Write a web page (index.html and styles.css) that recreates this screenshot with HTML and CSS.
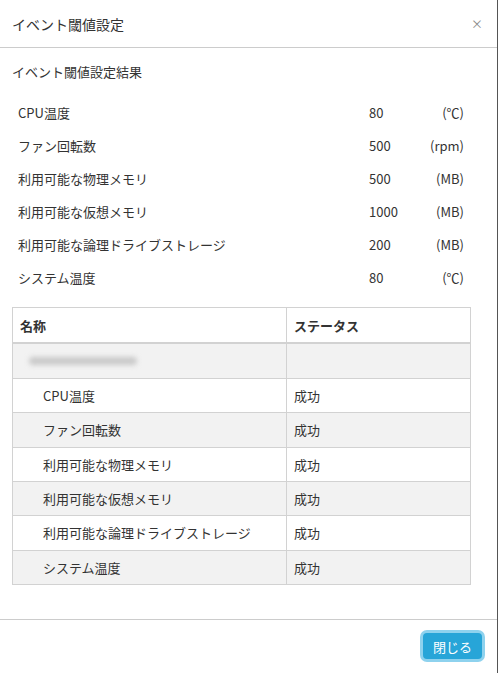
FILE: index.html
```html
<!DOCTYPE html>
<html>
<head>
  <meta charset="UTF-8">
  <title>イベント閾値設定</title>
  <link rel="stylesheet" href="styles.css">
</head>
<body>
  <div class="modal">
    <div class="modal-header">
      <h4 class="modal-title">イベント閾値設定</h4>
      <span class="close">×</span>
    </div>

    <div class="modal-body">
      <div class="section-title">イベント閾値設定結果</div>

      <div class="kv-list">
        <div class="kv-row"><span class="kv-label">CPU温度</span><span class="kv-value">80</span><span class="kv-unit">(℃)</span></div>
        <div class="kv-row"><span class="kv-label">ファン回転数</span><span class="kv-value">500</span><span class="kv-unit">(rpm)</span></div>
        <div class="kv-row"><span class="kv-label">利用可能な物理メモリ</span><span class="kv-value">500</span><span class="kv-unit">(MB)</span></div>
        <div class="kv-row"><span class="kv-label">利用可能な仮想メモリ</span><span class="kv-value">1000</span><span class="kv-unit">(MB)</span></div>
        <div class="kv-row"><span class="kv-label">利用可能な論理ドライブストレージ</span><span class="kv-value">200</span><span class="kv-unit">(MB)</span></div>
        <div class="kv-row"><span class="kv-label">システム温度</span><span class="kv-value">80</span><span class="kv-unit">(℃)</span></div>
      </div>

      <table class="result-table">
        <thead>
          <tr>
            <th class="col-name">名称</th>
            <th>ステータス</th>
          </tr>
        </thead>
        <tbody>
          <tr class="group-row">
            <td><span class="blurred"></span></td>
            <td></td>
          </tr>
          <tr><td class="child">CPU温度</td><td>成功</td></tr>
          <tr class="striped"><td class="child">ファン回転数</td><td>成功</td></tr>
          <tr><td class="child">利用可能な物理メモリ</td><td>成功</td></tr>
          <tr class="striped"><td class="child">利用可能な仮想メモリ</td><td>成功</td></tr>
          <tr><td class="child">利用可能な論理ドライブストレージ</td><td>成功</td></tr>
          <tr class="striped"><td class="child">システム温度</td><td>成功</td></tr>
        </tbody>
      </table>
    </div>

    <div class="modal-footer">
      <button class="btn btn-primary">閉じる</button>
    </div>
  </div>
</body>
</html>
```

FILE: styles.css
```css
:root {
  --text: #333333;
  --border: #cccccc;
  --table-border: #d2d2d2;
  --stripe: #f2f2f2;
  --primary: #27a5d8;
  --primary-ring: #8ed2ee;
}

body {
  margin: 0;
  padding: 0;
  font-family: "Noto Sans CJK JP", "Noto Sans", sans-serif;
  font-size: 13px;
  color: var(--text);
  background-color: #ffffff;
}

.modal {
  width: 498px;
  height: 673px;
  box-sizing: border-box;
  border-right: 1px solid #555555;
  display: flex;
  flex-direction: column;
}

.modal-header {
  display: flex;
  align-items: center;
  justify-content: space-between;
  height: 47px;
  padding: 0 14px 0 12px;
  border-bottom: 1px solid var(--border);
}

.modal-title {
  margin: 0;
  font-size: 14px;
  font-weight: normal;
  line-height: 20px;
}

.close {
  font-size: 12px;
  color: #8a8a8a;
  line-height: 20px;
  cursor: pointer;
}

.modal-body {
  flex: 1;
  padding: 14px 0 0 12px;
}

.section-title {
  line-height: 20px;
}

.kv-list {
  width: 446px;
  padding: 14px 0 13px 6px;
}

.kv-row {
  display: flex;
  align-items: center;
  height: 33px;
}

.kv-label {
  flex: 1;
}

.kv-value {
  width: 58px;
}

.kv-unit {
  width: 37px;
  text-align: right;
}

.result-table {
  width: 459px;
  border-collapse: collapse;
}

.result-table th,
.result-table td {
  border: 1px solid var(--table-border);
  padding: 0 7px;
  height: 33.34px;
  text-align: left;
}

.result-table th {
  font-weight: bold;
  border-bottom-width: 2px;
  height: 34px;
}

.result-table .group-row td {
  height: 34px;
}

.col-name {
  width: 259px;
}

.result-table td.child {
  padding-left: 30px;
}

.group-row td,
.striped td {
  background-color: var(--stripe);
}

.blurred {
  display: block;
  width: 108px;
  height: 8px;
  margin-left: 9px;
  background-color: #c9c9c9;
  border-radius: 4px;
  filter: blur(2.5px);
}

.modal-footer {
  display: flex;
  justify-content: flex-end;
  height: 54px;
  box-sizing: border-box;
  padding: 13px 15px 0 0;
  border-top: 1px solid var(--border);
}

.btn {
  height: 26px;
  padding: 0 10px;
  border: none;
  border-radius: 4px;
  font-family: inherit;
  font-size: 13px;
  cursor: pointer;
}

.btn-primary {
  background-color: var(--primary);
  color: #ffffff;
  box-shadow: 0 0 0 3px var(--primary-ring);
}
```
